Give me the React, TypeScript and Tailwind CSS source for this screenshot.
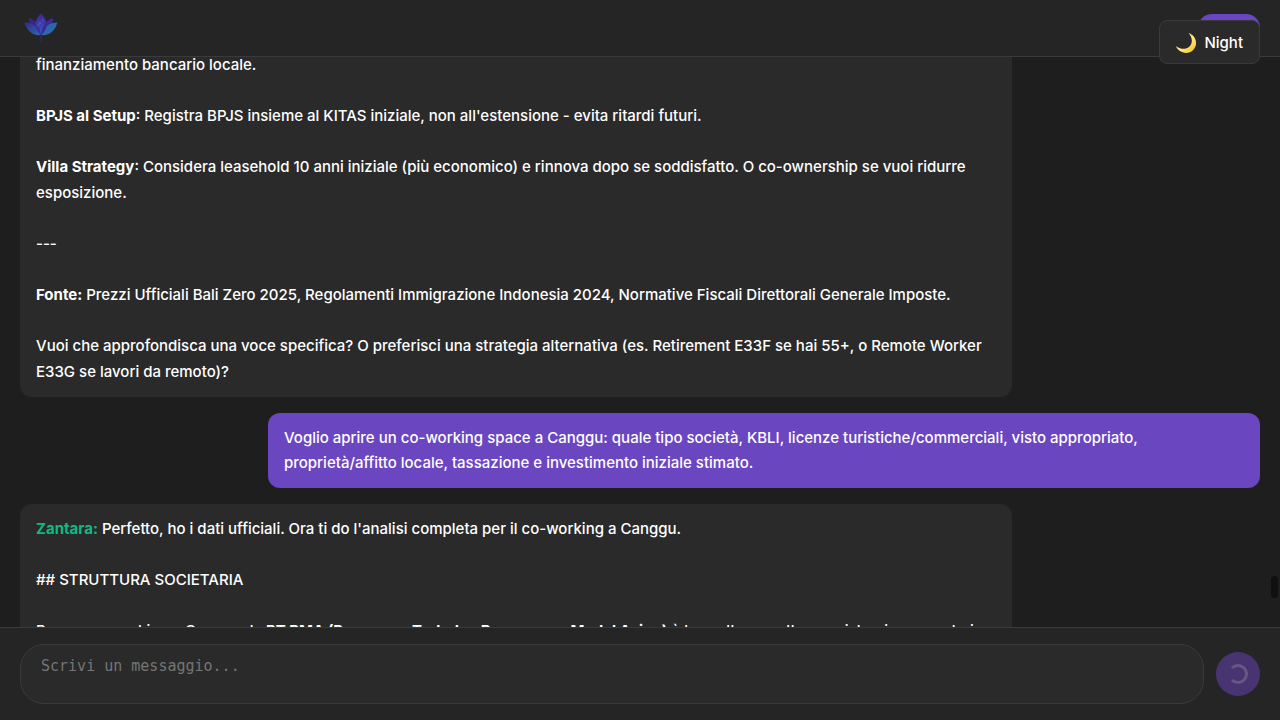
import React from "react";
import type { ReactNode } from "react";

function Lotus() {
  return (
    <svg viewBox="0 0 34 30" className="h-[30px] w-[34px]" role="img" aria-label="Zantara">
      <defs>
        <linearGradient id="outer" x1="0" y1="0" x2="1" y2="1">
          <stop offset="0" stopColor="#33278a" />
          <stop offset="1" stopColor="#2a6db0" />
        </linearGradient>
        <linearGradient id="core" x1="0" y1="0" x2="0" y2="1">
          <stop offset="0" stopColor="#47209a" />
          <stop offset="1" stopColor="#2f5fb6" />
        </linearGradient>
      </defs>
      <path d="M5 5C11 6.500 16 12 17 22C9 20 5 13 5 5Z" fill="#3a2290" />
      <path d="M29 5C23 6.500 18 12 17 22C25 20 29 13 29 5Z" fill="#3f279c" />
      <path d="M17 0.500C10 7 10 15 17 22C24 15 24 7 17 0.500Z" fill="url(#core)" />
      <path d="M0.500 9.500C8 9.500 14 13 17 22C9 23 3 18 0.500 9.500Z" fill="url(#outer)" />
      <path d="M33.500 9.500C26 9.500 20 13 17 22C25 23 31 18 33.500 9.500Z" fill="#2a67ad" />
      <path d="M11 8C10.500 14 13 19 17 22C16 16 14.500 11 11 8Z" fill="#40309f" />
      <path d="M23 8C23.500 14 21 19 17 22C18 16 19.500 11 23 8Z" fill="#3a2a98" />
      <path d="M17 21V29.500" stroke="#34286b" strokeWidth="1" />
      <circle cx="16" cy="10" r="0.800" fill="#5277cb" />
      <circle cx="14" cy="12" r="0.700" fill="#5277cb" />
      <circle cx="18.500" cy="7" r="0.700" fill="#5277cb" />
    </svg>
  );
}

function Moon() {
  return (
    <svg viewBox="0 0 20 20" className="size-5" aria-hidden="true">
      <defs>
        <linearGradient id="moon" x1="0" y1="0" x2="1" y2="1">
          <stop offset="0.550" stopColor="#ffe680" />
          <stop offset="0.780" stopColor="#fbd045" />
          <stop offset="1" stopColor="#eba421" />
        </linearGradient>
      </defs>
      <path d="M12.500 0C18.500 2 21.500 8 19.500 13.300C17.500 19 11.500 21.500 6 19C3 17.700 0.700 15.800 0 13C4 16.500 10 16.800 13.500 13.500C17 10 16.500 4 12.500 0Z" fill="url(#moon)" />
    </svg>
  );
}

function Reply({ children }: { children: ReactNode }) {
  return (
    <article className="flex w-4/5 shrink-0 flex-col gap-[25px] self-start rounded-xl bg-[#2a2a2a] px-4 py-3">
      {children}
    </article>
  );
}

export default function App() {
  return (
    <div className="flex h-screen flex-col overflow-hidden bg-[#1e1e1e] font-['Inter',sans-serif] text-[15px] leading-[26px] font-medium text-white">
      <header className="relative z-10 flex h-[57px] shrink-0 items-center justify-between border-b border-[#3a3a3a] bg-[#252525] px-5">
        <div className="px-1">
          <Lotus />
        </div>
        <button type="button" aria-label="Menu" className="h-7 w-[62px] rounded-2xl bg-[#6b46c1]" />
        <button
          type="button"
          className="absolute top-5 right-5 flex h-11 items-center gap-2 rounded-lg border border-[#3a3a3a] bg-[#2a2a2a] px-4 pt-0.5"
        >
          <Moon />
          Night
        </button>
      </header>

      <main className="relative min-h-0 flex-1 overflow-hidden px-5">
        <div className="-mt-[17px] flex flex-col gap-4">
          <Reply>
            <p>finanziamento bancario locale.</p>
            <p><strong>BPJS al Setup</strong>: Registra BPJS insieme al KITAS iniziale, non all'estensione - evita ritardi futuri.</p>
            <p><strong>Villa Strategy</strong>: Considera leasehold 10 anni iniziale (più economico) e rinnova dopo se soddisfatto. O co-ownership se vuoi ridurre esposizione.</p>
            <p>---</p>
            <p><strong>Fonte:</strong> Prezzi Ufficiali Bali Zero 2025, Regolamenti Immigrazione Indonesia 2024, Normative Fiscali Direttorali Generale Imposte.</p>
            <p>Vuoi che approfondisca una voce specifica? O preferisci una strategia alternativa (es. Retirement E33F se hai 55+, o Remote Worker E33G se lavori da remoto)?</p>
          </Reply>
          <article className="w-4/5 shrink-0 self-end rounded-xl bg-[#6b46c1] px-4 pt-3 pb-[13px] leading-[25px]">
            <p>Voglio aprire un co-working space a Canggu: quale tipo società, KBLI, licenze turistiche/commerciali, visto appropriato, <br />proprietà/affitto locale, tassazione e investimento iniziale stimato.</p>
          </article>
          <Reply>
            <p><strong className="text-[#10b981]">Zantara:</strong> Perfetto, ho i dati ufficiali. Ora ti do l'analisi completa per il co-working a Canggu.</p>
            <p>## STRUTTURA SOCIETARIA</p>
            <p>Per un co-working a Canggu, la <strong>PT PMA (Perseroan Terbatas Penanaman Modal Asing)</strong> è la scelta corretta e registrazione regolari</p>
          </Reply>
        </div>
        <div className="absolute right-[2px] bottom-[29px] h-[22px] w-[7px] rounded bg-[#101010]" />
      </main>

      <footer className="flex shrink-0 items-center gap-3 border-t border-[#3a3a3a] bg-[#252525] px-5 py-4">
        <textarea
          aria-label="Messaggio"
          placeholder="Scrivi un messaggio..."
          className="h-[60px] min-w-0 flex-1 resize-none rounded-3xl border border-[#3a3a3a] bg-[#2a2a2a] px-5 py-3 font-['DejaVu_Sans_Mono',monospace] text-[15px] leading-[19px] font-normal placeholder:text-[#757575]"
        />
        <button type="button" aria-label="Invio in corso" className="grid size-11 place-items-center rounded-full bg-[#493472]">
          <svg viewBox="0 0 20 20" className="size-5" fill="none" aria-hidden="true">
            <path d="M4 4A8.500 8.500 0 1 1 4 16" stroke="#685782" strokeWidth="3" />
          </svg>
        </button>
      </footer>
    </div>
  );
}
